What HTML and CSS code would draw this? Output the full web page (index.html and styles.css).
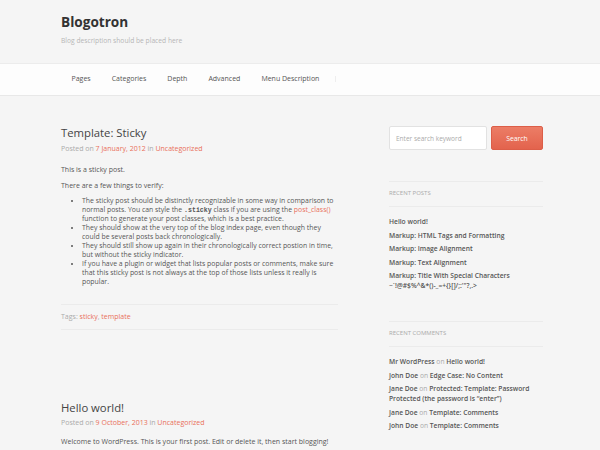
FILE: index.html
```html
<!DOCTYPE html>
<html>
<head>
<meta charset="utf-8">
<link rel="stylesheet" href="styles.css">
</head>
<body>
<header class="site-header">
  <div class="wrap">
    <h1 class="site-title">Blogotron</h1>
    <p class="site-desc">Blog description should be placed here</p>
  </div>
</header>
<nav class="site-nav">
  <div class="wrap nav-inner">
    <a class="nav-item">Pages</a>
    <a class="nav-item">Categories</a>
    <a class="nav-item">Depth</a>
    <a class="nav-item">Advanced</a>
    <a class="nav-item">Menu Description</a>
    <span class="nav-sep"></span>
  </div>
</nav>
<div class="wrap layout">
  <main class="content">
    <article class="post">
      <h2 class="post-title">Template: Sticky</h2>
      <div class="meta">Posted on <a class="link">7 January, 2012</a> in <a class="link">Uncategorized</a></div>
      <p class="para first">This is a sticky post.</p>
      <p class="para">There are a few things to verify:</p>
      <ul class="list">
        <li>The sticky post should be distinctly recognizable in some way in comparison to normal posts. You can style the <code>.sticky</code> class if you are using the <a class="link">post_class()</a> function to generate your post classes, which is a best practice.</li>
        <li>They should show at the very top of the blog index page, even though they could be several posts back chronologically.</li>
        <li>They should still show up again in their chronologically correct postion in time, but without the sticky indicator.</li>
        <li>If you have a plugin or widget that lists popular posts or comments, make sure that this sticky post is not always at the top of those lists unless it really is popular.</li>
      </ul>
      <div class="tags">Tags: <a class="link">sticky</a>, <a class="link">template</a></div>
    </article>
    <article class="post second">
      <h2 class="post-title">Hello world!</h2>
      <div class="meta">Posted on <a class="link">9 October, 2013</a> in <a class="link">Uncategorized</a></div>
      <p class="para welcome">Welcome to WordPress. This is your first post. Edit or delete it, then start blogging!</p>
    </article>
  </main>
  <aside class="sidebar">
    <form class="search">
      <input class="search-input" type="text" placeholder="Enter search keyword">
      <button class="search-btn" type="button">Search</button>
    </form>
    <section class="widget">
      <h3 class="widget-title">RECENT POSTS</h3>
      <ul class="widget-list">
        <li><a class="wlink">Hello world!</a></li>
        <li><a class="wlink">Markup: HTML Tags and Formatting</a></li>
        <li><a class="wlink">Markup: Image Alignment</a></li>
        <li><a class="wlink">Markup: Text Alignment</a></li>
        <li><a class="wlink">Markup: Title With Special Characters ~`!@#$%^&amp;*()-_=+{}[]/;:'"?,.&gt;</a></li>
      </ul>
    </section>
    <section class="widget">
      <h3 class="widget-title">RECENT COMMENTS</h3>
      <ul class="widget-list">
        <li><a class="wlink">Mr WordPress</a> <span class="on">on</span> <a class="wlink">Hello world!</a></li>
        <li><a class="wlink">John Doe</a> <span class="on">on</span> <a class="wlink">Edge Case: No Content</a></li>
        <li><a class="wlink">Jane Doe</a> <span class="on">on</span> <a class="wlink">Protected: Template: Password Protected (the password is “enter”)</a></li>
        <li><a class="wlink">Jane Doe</a> <span class="on">on</span> <a class="wlink">Template: Comments</a></li>
        <li><a class="wlink">John Doe</a> <span class="on">on</span> <a class="wlink">Template: Comments</a></li>
      </ul>
    </section>
  </aside>
</div>
</body>
</html>
```
FILE: styles.css
```css
* { box-sizing: border-box; }
html, body { margin: 0; padding: 0; }
body {
  background: #f5f5f5;
  font-family: "Open Sans", "Liberation Sans", sans-serif;
  color: #555;
  font-size: 7px;
  overflow: hidden;
}
.wrap { width: 482px; margin-left: 61px; }
.site-header { height: 63px; padding-top: 12px; }
.site-title {
  margin: 0;
  font-size: 13.6px;
  line-height: 20px;
  font-weight: 700;
  color: #333;
}
.site-desc {
  margin: 4px 0 0;
  font-size: 6.7px;
  line-height: 10px;
  color: #b5b5b5;
}
.site-nav {
  height: 33px;
  background: #fdfdfd;
  border-top: 1px solid #ececec;
  border-bottom: 1px solid #e8e8e8;
}
.nav-inner { display: flex; align-items: center; padding-top: 10px; line-height: 10px; }
.nav-item {
  padding: 0 10.5px;
  font-size: 7px;
  color: #555;
}
.nav-sep { width: 1px; height: 6px; background: #eee; margin-left: 5.5px; }
.layout { display: flex; gap: 51px; padding-top: 29px; }
.content { width: 277px; }
.sidebar { width: 154px; padding-top: 1px; }
.post-title {
  margin: 0;
  font-size: 11.3px;
  line-height: 16px;
  font-weight: 400;
  color: #444;
}
.meta { margin-top: 2.5px; color: #aaa; line-height: 9px; }
.link { color: #e9705b; }
.para { margin: 0; line-height: 9px; }
.para.first { margin-top: 12px; }
.para + .para { margin-top: 7px; }
.para.welcome { margin-top: 10px; }
.list {
  margin: 6px 0 0;
  padding-left: 21px;
  line-height: 9px;
  font-size: 6.9px;
}
code { font-family: "Liberation Mono", monospace; font-weight: 700; font-size: 6.6px; line-height: 1; }
.tags {
  margin-top: 17.5px;
  border-top: 1px solid #ebebeb;
  border-bottom: 1px solid #ebebeb;
  padding: 7.5px 0 7.5px;
  color: #aaa;
  line-height: 9px;
}
.post.second { margin-top: 70px; }
.search { display: flex; gap: 4px; height: 24px; }
.search-input {
  width: 98px;
  height: 24px;
  border: 1px solid #e2e2e2;
  border-radius: 2px;
  background: #fff;
  font-family: inherit;
  font-size: 6.5px;
  padding: 0 6px;
  color: #555;
}
.search-input::placeholder { color: #aaa; }
.search-btn {
  width: 52px;
  height: 24px;
  border: 1px solid #dc5e48;
  border-radius: 2px;
  background: linear-gradient(#ec7d66, #e3634d);
  color: #fff;
  font-family: inherit;
  font-size: 6.8px;
}
.widget { margin-top: 31px; }
.widget + .widget { margin-top: 30px; }
.widget-title {
  margin: 0;
  border-top: 1px solid #ebebeb;
  border-bottom: 1px solid #ebebeb;
  font-size: 6px;
  font-weight: 400;
  color: #aaa;
  line-height: 9px;
  padding: 6.5px 0 8px;
}
.widget-list { list-style: none; margin: 10.5px 0 0; padding: 0; line-height: 10px; font-size: 6.7px; }
.widget-list li { margin-bottom: 3.5px; }
.wlink { color: #555; font-weight: 600; }
.on { color: #aaa; }
```
